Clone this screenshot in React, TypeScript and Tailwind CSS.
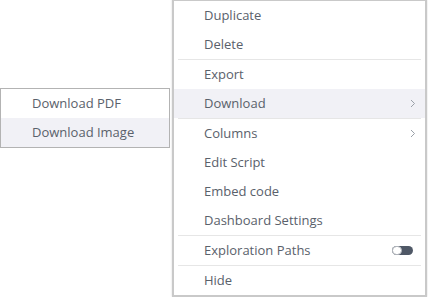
import React from "react";

const font = { fontFamily: '"Open Sans", "Noto Sans", sans-serif' };

function Item({ label, active, chevron, toggle }: { label: string; active?: boolean; chevron?: boolean; toggle?: boolean }) {
  return (
    <div className={`flex h-[29px] items-center justify-between pl-[30px] pr-[12px] text-[13px] text-[#5a616b] ${active ? "bg-[#f1f1f6]" : ""}`}>
      <span>{label}</span>
      {chevron && (
        <svg width="6" height="9" viewBox="0 0 6 9" className="mr-[-3px]">
          <path d="M1 1 L4.5 4.5 L1 8" fill="none" stroke="#9aa0a8" strokeWidth="1" />
        </svg>
      )}
      {toggle && (
        <div className="relative h-[9px] w-[21px] rounded-full bg-[#4f5866]">
          <div className="absolute left-0 top-0 h-[9px] w-[10px] rounded-full border border-[#b5b9bf] bg-white" />
        </div>
      )}
    </div>
  );
}

function Sep() {
  return <div className="mx-[4px] h-px bg-[#e6e6e6]" />;
}

export default function App() {
  return (
    <div className="relative h-[297px] w-[428px] overflow-hidden bg-white" style={font}>
      <div className="absolute left-[172px] top-[-1px] w-[255px] border-2 border-[#c9c9c9] bg-white shadow-[0_0_2px_rgba(0,0,0,0.15)]">
        <Item label="Duplicate" />
        <Item label="Delete" />
        <Sep />
        <Item label="Export" />
        <Item label="Download" active chevron />
        <Sep />
        <Item label="Columns" chevron />
        <Item label="Edit Script" />
        <Item label="Embed code" />
        <Item label="Dashboard Settings" />
        <Sep />
        <Item label="Exploration Paths" toggle />
        <Sep />
        <Item label="Hide" />
      </div>
      <div className="absolute left-0 top-[88px] w-[170px] border border-[#b3b3b3] bg-white">
        <div className="flex h-[29px] items-center pl-[31px] text-[13px] text-[#5a616b]">Download PDF</div>
        <div className="flex h-[29px] items-center bg-[#f1f1f6] pl-[31px] text-[13px] text-[#5a616b]">Download Image</div>
      </div>
    </div>
  );
}
